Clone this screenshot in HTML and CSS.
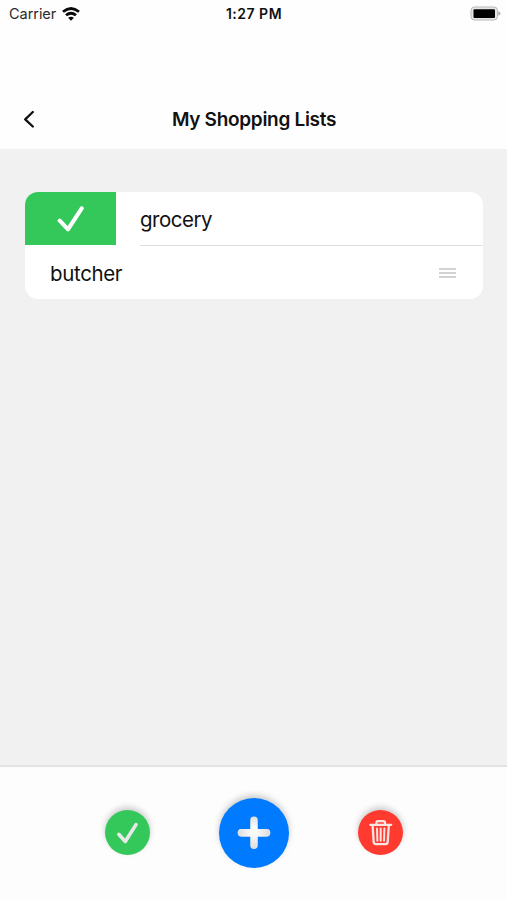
FILE: index.html
```html
<!DOCTYPE html>
<html lang="en">
<head>
<meta charset="utf-8">
<title>My Shopping Lists</title>
<link rel="stylesheet" href="styles.css">
</head>
<body>
<header class="header">
  <div class="status">
    <div class="carrier"><span class="carrier-name">Carrier</span>
      <svg class="wifi" width="18" height="14" viewBox="0 0 18 14" fill="none" stroke="#0a0a0a" stroke-width="2.8">
        <path d="M1 4.8Q9-1.9 17 4.8M4 8.3Q9 4.1 14 8.3"/>
        <path d="M9 13.8L6.1 10.8Q9 8.6 11.9 10.8Z" fill="#0a0a0a" stroke="none"/>
      </svg>
    </div>
    <time class="clock">1:27 PM</time>
    <svg class="battery" width="31" height="16" viewBox="0 0 31 16">
      <rect x="1" y="1" width="26.5" height="13" rx="3.5" fill="#e6e6e6" stroke="#b9b9b9"/>
      <rect x="3.5" y="3.3" width="21.5" height="8.7" rx="1" fill="#000"/>
      <path d="M28.3 5.3Q30.5 6 30.5 7.5T28.3 9.7Z" fill="#aaa"/>
    </svg>
  </div>
  <nav class="nav">
    <svg class="back" width="12" height="18" viewBox="0 0 12 18" fill="none" stroke="#111" stroke-width="2.3" stroke-linecap="round" stroke-linejoin="round"><path d="M9.8 2L2.2 9.3l7.6 7.2"/></svg>
    <h1 class="title">My Shopping Lists</h1>
  </nav>
</header>
<main class="main">
  <ul class="list">
    <li class="row">
      <div class="swipe">
        <svg width="28" height="28" viewBox="0 0 28 28" fill="none" stroke="#fff" stroke-width="4.1" stroke-linecap="round" stroke-linejoin="round"><path d="M2.7 15.7l8.3 8.6L24.7 3.3"/></svg>
      </div>
      <div class="swiped"><span class="grocery">grocery</span></div>
    </li>
    <li class="row plain">
      <span class="butcher">butcher</span>
      <svg width="17" height="12" viewBox="0 0 17 12" stroke="#d2d2d2" stroke-width="1.9"><path d="M0 2h17M0 6h17M0 10h17"/></svg>
    </li>
  </ul>
</main>
<footer class="toolbar">
  <button class="round green" aria-label="Complete">
    <svg width="45" height="45" viewBox="0 0 45 45" fill="none" stroke="#e8e8e8" stroke-width="3.6" stroke-linecap="round" stroke-linejoin="round"><path d="M13.8 24.3l6.5 7.2L31 14.6"/></svg>
  </button>
  <button class="round blue" aria-label="Add">
    <svg width="70" height="70" viewBox="0 0 70 70" fill="none" stroke-width="7.5" stroke-linecap="round">
      <defs>
        <linearGradient id="v" gradientUnits="userSpaceOnUse" x1="0" y1="18" x2="0" y2="51"><stop offset="0" stop-color="#dedede"/><stop offset=".4" stop-color="#fff"/><stop offset=".65" stop-color="#f4f4f4"/><stop offset="1" stop-color="#dcdcdc"/></linearGradient>
        <linearGradient id="h" gradientUnits="userSpaceOnUse" x1="18" y1="0" x2="51" y2="0"><stop offset="0" stop-color="#dcdcdc"/><stop offset=".5" stop-color="#fff"/><stop offset="1" stop-color="#dcdcdc"/></linearGradient>
      </defs>
      <path d="M22.5 34.7h25" stroke="#e6e6e6"/>
      <path d="M22.5 34.7L47.5 34.71" stroke="url(#h)"/>
      <path d="M35 22.3L35.01 47.3" stroke="url(#v)"/>
    </svg>
  </button>
  <button class="round red" aria-label="Delete">
    <svg width="45" height="45" viewBox="0 0 45 45" fill="none" stroke="#f8e4e2" stroke-width="2.3" stroke-linecap="round" stroke-linejoin="round">
      <path d="M12.3 14.8h20.9M18.4 14.5v-1.7q0-1.7 1.7-1.7h5.2q1.7 0 1.7 1.7v1.7"/>
      <path d="M14.6 15.2l1.1 17q.2 2 2.3 2h9.4q2.1 0 2.3-2l1.1-17"/>
      <path d="M19 18.4l.4 12.4M22.7 18.4v12.4M26.4 18.4l-.4 12.4" stroke-width="2"/>
    </svg>
  </button>
</footer>
</body>
</html>
```
FILE: styles.css
```css
* { box-sizing: border-box; }
body {
  margin: 0;
  height: 900px;
  display: flex;
  flex-direction: column;
  overflow: hidden;
  background: #f1f1f1;
  color: #111;
  font-family: Inter, "Liberation Sans", sans-serif;
}
svg { display: block; flex: none; }
.header { height: 149px; background: #fefefe; }
.status {
  height: 28px;
  padding: 0 6px 0 9px;
  display: grid;
  grid-template-columns: 1fr auto 1fr;
  align-items: center;
  line-height: 28px;
}
.carrier { display: flex; align-items: center; gap: 6px; font-size: 14.5px; color: #292929; }
.carrier-name { letter-spacing: -0.05px; }
.clock { font-size: 14px; font-weight: 600; letter-spacing: 0.5px; padding-right: 2px; }
.battery { justify-self: end; }
.nav {
  height: 40px;
  margin-top: 71px;
  padding: 0 23px;
  display: grid;
  grid-template-columns: 12px 1fr 12px;
  align-items: center;
}
.title { margin: 0; padding: 2px 0 0 1px; text-align: center; font-size: 19px; line-height: 38px; font-weight: 600; letter-spacing: -0.3px; }
.main { flex: 1; padding: 43px 24px 0 25px; }
.list { margin: 0; padding: 0; list-style: none; background: #fff; border-radius: 13px; overflow: hidden; font-size: 20.5px; }
.row { height: 54px; display: flex; line-height: 54px; }
.row.plain { height: 53px; align-items: center; justify-content: space-between; padding: 0 27px 0 25px; line-height: 53px; }
.swipe { width: 91px; height: 53px; background: #34c759; display: flex; align-items: center; justify-content: center; }
.swiped { flex: 1; margin-left: 24px; border-bottom: 1px solid #dedede; line-height: 56px; }
.grocery { letter-spacing: -0.5px; }
.butcher { letter-spacing: -0.35px; padding-top: 2px; }
.toolbar {
  height: 135px;
  padding-bottom: 2px;
  border-top: 2px solid #e3e3e3;
  background: #fdfdfd;
  display: flex;
  align-items: center;
  justify-content: center;
  gap: 69px;
}
.round { padding: 0; border: 0; border-radius: 50%; width: 45px; height: 45px; flex: none; box-shadow: 0 -3px 6px rgba(0, 0, 0, .2); }
.green { background: #34c759; }
.blue { width: 70px; height: 70px; background: #007aff; }
.red { background: #ff3b30; }
```
